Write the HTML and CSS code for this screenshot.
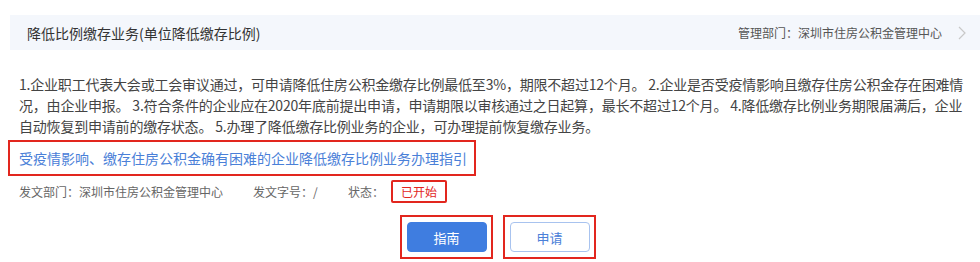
FILE: index.html
```html
<!DOCTYPE html>
<html lang="zh-CN">

<head>
    <meta charset="UTF-8">
    <meta name="viewport" content="width=device-width, initial-scale=1.0">
    <title>降低比例缴存业务</title>
    <link rel="stylesheet" href="styles.css">
</head>

<body>
    <div class="item">
        <div class="item-head">
            <span class="item-title">降低比例缴存业务(单位降低缴存比例)</span>
            <span class="item-dept">
                管理部门：深圳市住房公积金管理中心
                <svg class="arrow" width="8" height="14" viewBox="0 0 8 14">
                    <polyline points="1,1 7,7 1,13" fill="none" stroke="#c8c8c8" stroke-width="1.2" />
                </svg>
            </span>
        </div>

        <div class="item-body">
            <p class="desc">1.企业职工代表大会或工会审议通过，可申请降低住房公积金缴存比例最低至3%，期限不超过12个月。 2.企业是否受疫情影响且缴存住房公积金存在困难情况，由企业申报。 3.符合条件的企业应在2020年底前提出申请，申请期限以审核通过之日起算，最长不超过12个月。 4.降低缴存比例业务期限届满后，企业自动恢复到申请前的缴存状态。 5.办理了降低缴存比例业务的企业，可办理提前恢复缴存业务。</p>

            <a class="guide-link mark" href="#">受疫情影响、缴存住房公积金确有困难的企业降低缴存比例业务办理指引</a>

            <div class="meta">
                <span class="meta-dept">发文部门：深圳市住房公积金管理中心</span>
                <span class="meta-no">发文字号：/</span>
                <span class="meta-state">状态：</span>
                <span class="state mark">已开始</span>
            </div>

            <div class="actions">
                <span class="mark btn-wrap"><button class="btn btn-primary">指南</button></span>
                <span class="mark btn-wrap"><button class="btn btn-plain">申请</button></span>
            </div>
        </div>
    </div>
</body>

</html>
```

FILE: styles.css
```css
body {
    font-family: "Noto Sans CJK SC", "Noto Sans", sans-serif;
    background-color: #fff;
    margin: 0;
    padding: 0;
    color: #444;
}

.item {
    padding-top: 15px;
}

.item-head {
    display: flex;
    justify-content: space-between;
    align-items: center;
    height: 35px;
    margin-left: 10px;
    padding: 0 14px 0 17px;
    background-color: #f4f7fc;
}

.item-title {
    font-size: 14px;
    color: #333;
}

.item-dept {
    display: flex;
    align-items: center;
    gap: 16px;
    font-size: 12px;
    color: #555;
}

.item-body {
    padding: 0 6px 0 19px;
}

.desc {
    margin: 24px 0 0 0;
    font-size: 14px;
    line-height: 21px;
    letter-spacing: -0.2px;
    color: #444;
}

/* red highlight frames */
.mark {
    border: 2px solid #e2261e;
}

.guide-link {
    display: inline-block;
    margin: 3px 0 0 -11px;
    padding: 6px 7px 6px 9px;
    font-size: 14px;
    line-height: 20px;
    color: #4a80d8;
    text-decoration: none;
}

.meta {
    display: flex;
    align-items: center;
    margin-top: 4px;
    font-size: 12px;
    color: #666;
}

.meta-dept {
    width: 234px;
}

.meta-no {
    width: 95px;
}

.meta-state {
    width: 43px;
}

.state {
    padding: 2px 8px;
    line-height: 15px;
    color: #e2261e;
    border-radius: 2px;
}

.actions {
    display: flex;
    justify-content: center;
    gap: 10px;
    margin-top: 12px;
    padding-left: 2px;
}

.btn-wrap {
    padding: 5px 4px 5px 5px;
}

.btn {
    display: block;
    width: 80px;
    height: 30px;
    font-family: inherit;
    font-size: 13px;
    border-radius: 4px;
    cursor: pointer;
}

.btn-primary {
    background-color: #3f7de0;
    border: 1px solid #3f7de0;
    color: #fff;
}

.btn-plain {
    background-color: #fff;
    border: 1px solid #a8c3ef;
    color: #4a80d8;
}
```
